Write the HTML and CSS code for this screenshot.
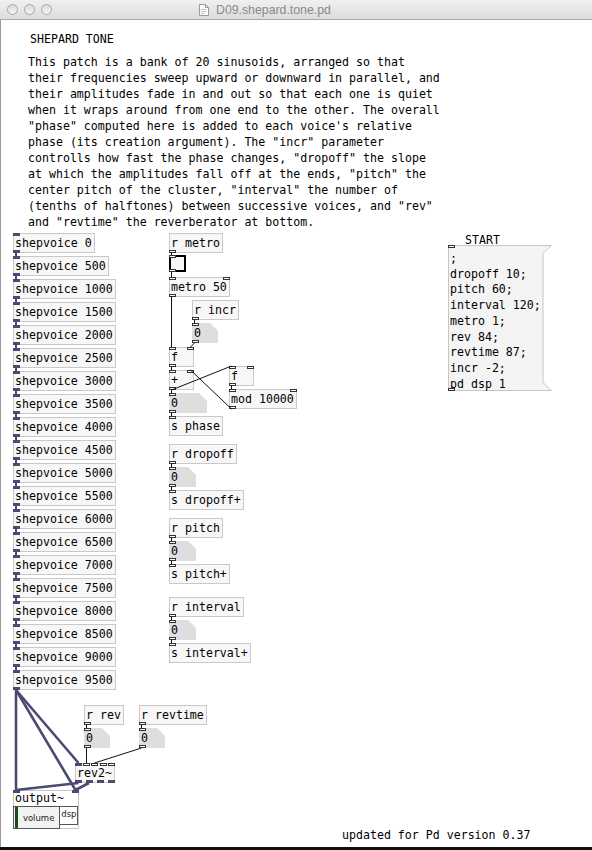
FILE: index.html
```html
<!DOCTYPE html>
<html>
  <head>
    <meta charset="utf-8">
    <link rel="stylesheet" href="styles.css">
  </head>
  <body>
    <div class="titlebar">
      <div class="lights"><span></span><span></span><span></span></div>
      <div class="title">
        <svg class="doc-icon" width="10" height="12" viewBox="0 0 10 12">
          <path d="M0.5 0.5h6l3 3v8h-9z" fill="#fbfbfb" stroke="#9a9a9a"/>
          <path d="M6.5 0.5v3h3" fill="none" stroke="#9a9a9a"/>
          <path d="M2 5.5h5M2 7.5h5M2 9.5h3" stroke="#c4c4c4"/>
        </svg>
        <span>D09.shepard.tone.pd</span>
      </div>
    </div>

    <div id="canvas" class="canvas">
      <svg id="wires" class="wires" width="592" height="827" viewBox="0 20 592 827"></svg>

      <div id="c-head" class="comment">SHEPARD TONE</div>
      <div id="c-body" class="comment">This patch is a bank of 20 sinusoids, arranged so that
their frequencies sweep upward or downward in parallel, and
their amplitudes fade in and out so that each one is quiet
when it wraps around from one end to the other. The overall
"phase" computed here is added to each voice's relative
phase (its creation argument). The "incr" parameter
controlls how fast the phase changes, "dropoff" the slope
at which the amplitudes fall off at the ends, "pitch" the
center pitch of the cluster, "interval" the number of
(tenths of halftones) between successive voices, and "rev"
and "revtime" the reverberator at bottom.</div>
      <div id="c-start" class="comment">START</div>
      <div id="c-version" class="comment">updated for Pd version 0.37</div>

      <!-- message box with the start-up values -->
      <div id="m-start" class="msg">
        <svg class="flag" width="104" height="146" viewBox="0 0 104 146">
          <path d="M0.5 0.5H103.5L95 8.5V137.5L103.5 145.5H0.5Z" fill="#f4f4f4" stroke="#c6c6c6"/>
        </svg>
        <div class="msg-text">;
dropoff 10;
pitch 60;
interval 120;
metro 1;
rev 84;
revtime 87;
incr -2;
pd dsp 1</div>
        <div class="port in"></div>
        <div class="port out"></div>
      </div>

      <!-- graph-on-parent output~ abstraction -->
      <div id="g-output" class="gop">
        <div class="port in sig"></div>
        <div class="port in sig right"></div>
        <div class="gop-label">output~</div>
        <div class="gop-body">
          <div class="slider"><i class="knob"></i><span>volume</span></div>
          <div class="toggle"><span>dsp</span></div>
        </div>
      </div>
    </div>
    <div class="bottom-edge"></div>

    <script type="text/javascript">
      const OY = 20
      const canvas = document.getElementById('canvas')
      const wires = document.getElementById('wires')

      let boxes = []
      for (let i = 0; i < 20; i++) {
        boxes.push({x: 13, y: 233 + 23 * i, text: 'shepvoice ' + i * 500, ins: ['s'], outs: ['s']})
      }
      boxes = boxes.concat([
        {x: 169, y: 233, text: 'r metro', outs: ['c']},
        {k: 'bng', x: 169, y: 255, ins: ['c'], outs: ['c']},
        {x: 169, y: 277, text: 'metro 50', ins: ['c', 'c'], outs: ['c']},
        {x: 192, y: 300, text: 'r incr', outs: ['c']},
        {k: 'num', x: 192, y: 323, w: 26, text: '0', ins: ['c'], outs: ['c']},
        {x: 169, y: 347, text: 'f', ins: ['c', 'c'], outs: ['c']},
        {x: 169, y: 370, text: '+', ins: ['c', 'c'], outs: ['c']},
        {k: 'num', x: 169, y: 393, w: 38, text: '0', ins: ['c'], outs: ['c']},
        {x: 169, y: 416, text: 's phase', ins: ['c']},
        {x: 229, y: 366, text: 'f', ins: ['c', 'c'], outs: ['c']},
        {x: 229, y: 389, text: 'mod 10000', ins: ['c', 'c'], outs: ['c']},
        {x: 169, y: 444, text: 'r dropoff', outs: ['c']},
        {k: 'num', x: 169, y: 467, w: 27, text: '0', ins: ['c'], outs: ['c']},
        {x: 169, y: 490, text: 's dropoff+', ins: ['c']},
        {x: 169, y: 518, text: 'r pitch', outs: ['c']},
        {k: 'num', x: 169, y: 541, w: 27, text: '0', ins: ['c'], outs: ['c']},
        {x: 169, y: 564, text: 's pitch+', ins: ['c']},
        {x: 169, y: 597, text: 'r interval', outs: ['c']},
        {k: 'num', x: 169, y: 620, w: 27, text: '0', ins: ['c'], outs: ['c']},
        {x: 169, y: 643, text: 's interval+', ins: ['c']},
        {x: 84, y: 705, text: 'r rev', outs: ['c']},
        {k: 'num', x: 84, y: 728, w: 26, text: '0', ins: ['c'], outs: ['c']},
        {x: 139, y: 705, text: 'r revtime', outs: ['c']},
        {k: 'num', x: 139, y: 728, w: 26, text: '0', ins: ['c'], outs: ['c']},
        {x: 75, y: 763, text: 'rev2~', ins: ['s', 'c', 'c', 'c', 'c'], outs: ['s', 's', 's', 's']}
      ])

      function addPort(box, kind, where, i, n) {
        let p = document.createElement('div')
        p.className = 'port ' + where + (kind === 's' ? ' sig' : '')
        p.style.left = n > 1 ? `calc((100% - 5px) * ${i / (n - 1)})` : '0'
        box.appendChild(p)
      }

      boxes.forEach(o => {
        let box = document.createElement('div')
        box.className = 'box ' + (o.k || 'obj')
        box.style.left = `${o.x}px`
        box.style.top = `${o.y - OY}px`
        if (o.w) box.style.width = `${o.w}px`
        if (o.text) {
          let label = document.createElement('span')
          label.textContent = o.text
          box.appendChild(label)
        }
        let ins = o.ins || []
        let outs = o.outs || []
        ins.forEach((k, i) => addPort(box, k, 'in', i, ins.length))
        outs.forEach((k, i) => addPort(box, k, 'out', i, outs.length))
        canvas.appendChild(box)
      })

      // control connections, page coordinates
      const thin = [
        [171.5, 252, 171.5, 255], [171.5, 272, 171.5, 277], [171.5, 296, 171.5, 347],
        [194.5, 320, 194.5, 323], [194.5, 343, 190.5, 347],
        [171.5, 367, 171.5, 370], [171.5, 390, 171.5, 393], [171.5, 390, 231.5, 366],
        [231.5, 409, 190.5, 370], [231.5, 386, 231.5, 389], [171.5, 413, 171.5, 416],
        [171.5, 464, 171.5, 467], [171.5, 487, 171.5, 490],
        [171.5, 538, 171.5, 541], [171.5, 561, 171.5, 564],
        [171.5, 617, 171.5, 620], [171.5, 640, 171.5, 643],
        [86.5, 725, 86.5, 728], [86.5, 748, 86.5, 763],
        [141.5, 725, 141.5, 728], [141.5, 748, 94.5, 763]
      ]
      // signal connections
      let thick = []
      for (let i = 0; i < 19; i++) {
        thick.push([16, 253 + 23 * i, 16, 256 + 23 * i])
      }
      const fat = [
        [16, 690, 16, 790], [16, 690, 78.5, 763], [16, 690, 75.5, 790],
        [78.5, 783, 16, 790], [89, 783, 75.5, 790]
      ]

      function drawLines(list, cls) {
        list.forEach(l => {
          let line = document.createElementNS('http://www.w3.org/2000/svg', 'line')
          line.setAttribute('x1', l[0])
          line.setAttribute('y1', l[1])
          line.setAttribute('x2', l[2])
          line.setAttribute('y2', l[3])
          line.setAttribute('class', cls)
          wires.appendChild(line)
        })
      }
      drawLines(thin, 'w-ctl')
      drawLines(thick, 'w-sig')
      drawLines(fat, 'w-sig fat')
    </script>
  </body>
</html>
```

FILE: styles.css
```css
body {margin: 0; background: #fff; overflow: hidden}

.titlebar {display: flex; align-items: center; height: 19px; border-bottom: 1px solid #a9a9a9; background: linear-gradient(#f0f0f0, #dcdcdc)}
.lights {display: flex; gap: 6px; padding-left: 7px}
.lights span {width: 9px; height: 9px; border-radius: 50%; border: 1px solid #a6a6a6; background: linear-gradient(#dadada, #f4f4f4)}
.title {display: flex; align-items: center; gap: 7px; margin-left: 147px; color: #8a8a8a; font: 12.3px "Liberation Sans", Arial, sans-serif}

.canvas {position: relative; height: 827px; box-shadow: inset 1px 0 #9a9a9a; font: 11.6px "DejaVu Sans Mono", monospace; color: #000}
.bottom-edge {height: 3px; background: #111}

.wires {position: absolute; top: 0; left: 0; z-index: 3; pointer-events: none}
.w-ctl {stroke: #111; stroke-width: 1}
.w-sig {stroke: #4d4a72; stroke-width: 2}
.w-sig.fat {stroke-width: 2.6}

.comment {position: absolute; white-space: pre; line-height: 16px}
#c-head {left: 30px; top: 11px}
#c-body {left: 28px; top: 34px}
#c-start {left: 465px; top: 212px}
#c-version {left: 342px; top: 807px}

/* boxes */
.box {position: absolute; box-sizing: border-box; height: 20px; white-space: pre}
.obj {min-width: 25px; padding: 0 2px 0 1px; border: 1px solid #c9c9c9; background: #f7f7f7; line-height: 18px}
.num {padding-left: 2px; line-height: 20px; background: #dedede; clip-path: polygon(0 0, calc(100% - 8px) 0, 100% 8px, 100% 100%, 0 100%)}
.bng {width: 17px; height: 17px; border: 2px solid #000; background: #f6f6f6}

.port {position: absolute; z-index: 2; box-sizing: border-box; width: 7px; height: 3px; margin-left: -1px; border: 1px solid #333; background: #fff}
.port.in {top: -1px}
.port.out {bottom: -1px}
.port.sig {background: #4d4a72; border-color: #4d4a72}
.num .port {margin-left: 0}
.num .port.in {top: 0}
.num .port.out {bottom: 0}
.bng .port {margin-left: -2px}
.bng .port.in {top: -2px}
.bng .port.out {bottom: -2px}

/* message box */
.msg {position: absolute; left: 448px; top: 225px; width: 104px; height: 146px}
.flag {position: absolute; top: 0; left: 0}
.msg-text {position: relative; padding: 6px 0 0 2px; white-space: pre; line-height: 15.7px}
.msg .port {margin-left: 0}
.msg .port.in {top: 0; left: 0}
.msg .port.out {bottom: 0; left: 0}

/* output~ */
.gop {position: absolute; left: 13px; top: 770px; box-sizing: border-box; width: 66px; height: 39px; border: 1px solid #c6c6c6; background: #fff}
.gop .port.in {left: 0}
.gop .port.right {left: auto; right: -1px}
.gop-label {height: 15px; padding-left: 1px; line-height: 15px}
.gop-body {display: flex}
.slider {position: relative; box-sizing: border-box; width: 48px; height: 23px; margin-left: -1px; border: 1px solid #555; background: #f2f2f2; display: flex; align-items: center; justify-content: center}
.slider span, .toggle span {font: 8.5px "DejaVu Sans", sans-serif; color: #222}
.slider span {margin-left: 4px}
.knob {position: absolute; left: 1px; top: 0; bottom: 0; width: 3px; background: #1f4a1f}
.toggle {box-sizing: border-box; width: 18px; height: 19px; border: 1px solid #555; border-left: 0; padding: 1px 0 0 1px; line-height: 10px}
```
